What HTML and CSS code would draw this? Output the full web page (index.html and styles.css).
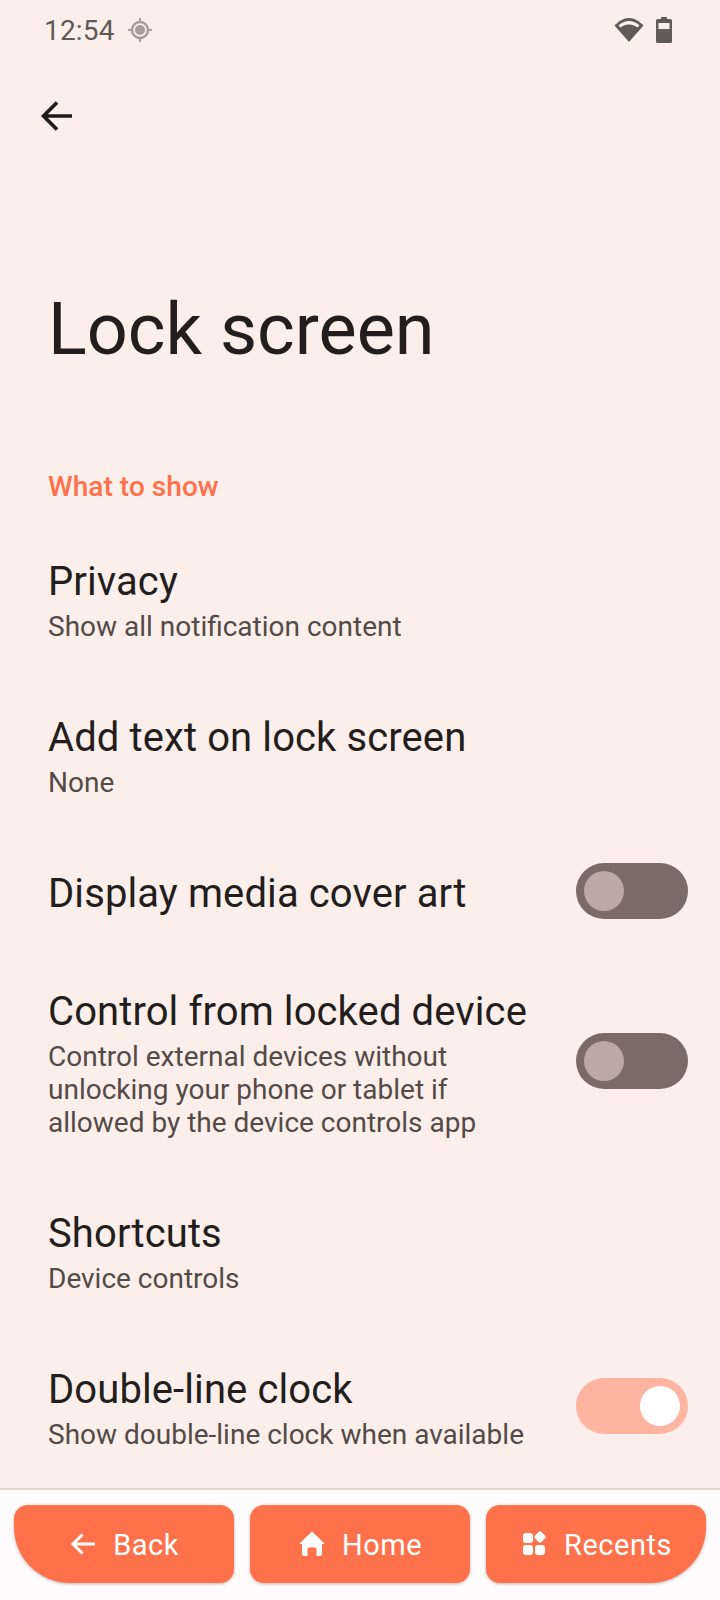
FILE: index.html
```html
<!DOCTYPE html>
<html lang="en">
<head>
<meta charset="utf-8">
<title>Lock screen</title>
<link rel="stylesheet" href="styles.css">
</head>
<body>
<div class="screen">
  <main class="content">
    <div class="status">
      <div class="status-left">
        <span class="time">12:54</span>
        <svg class="loc" viewBox="0 0 24 24" width="24" height="24"><circle cx="12" cy="12" r="8" fill="none" stroke="#a89c9a" stroke-width="2.500"/><circle cx="12" cy="12" r="5" fill="#a89c9a"/><path d="M12 0v4M12 20v4M0 12h4M20 12h4" stroke="#a89c9a" stroke-width="2" fill="none"/></svg>
      </div>
      <div class="status-right">
        <svg class="wifi" viewBox="0 0 30 26" width="30" height="26"><path d="M15 25 0.500 8.500C4.500 4.500 9.500 1 15 1s10.500 3.500 14.500 7.500z" fill="#625a59"/><path d="M4.500 8.500C7.500 5.500 11 4 15 4s7.500 1.500 10.500 4.500L23.500 10.500C21 8.500 18 7.500 15 7.500s-6 1-8.500 3z" fill="#fceeeb"/></svg>
        <svg class="batt" viewBox="0 0 16 26" width="16" height="26"><path d="M5 0h6v2h3.500a1.500 1.500 0 0 1 1.500 1.500v21a1.500 1.500 0 0 1-1.500 1.500h-13A1.500 1.500 0 0 1 0 24.500v-21A1.500 1.500 0 0 1 1.500 2H5z" fill="#625a59"/><rect x="2.500" y="6" width="11" height="6" fill="#fceeeb"/></svg>
      </div>
    </div>
    <div class="appbar">
      <svg viewBox="0 0 32 32" width="32" height="32"><path d="M32 16H4M17 2.500 3.500 16 17 29.500" fill="none" stroke="#1e1a19" stroke-width="3.600"/></svg>
    </div>
    <h1 class="title">Lock screen</h1>
    <h2 class="section">What to show</h2>
    <div class="item"><div class="text"><div class="name">Privacy</div><div class="sub">Show all notification content</div></div></div>
    <div class="item"><div class="text"><div class="name">Add text on lock screen</div><div class="sub">None</div></div></div>
    <div class="item item-single"><div class="text"><div class="name">Display media cover art</div></div><div class="toggle"><span class="knob"></span></div></div>
    <div class="item"><div class="text"><div class="name">Control from locked device</div><div class="sub">Control external devices without<br>unlocking your phone or tablet if<br>allowed by the device controls app</div></div><div class="toggle"><span class="knob"></span></div></div>
    <div class="item"><div class="text"><div class="name">Shortcuts</div><div class="sub">Device controls</div></div></div>
    <div class="item"><div class="text"><div class="name">Double-line clock</div><div class="sub">Show double-line clock when available</div></div><div class="toggle on"><span class="knob"></span></div></div>
  </main>
  <nav class="nav">
    <div class="btn btn-back">
      <svg viewBox="0 0 28 28" width="28" height="28"><path d="M26 14H5M13.500 4.500 4 14l9.500 9.500" fill="none" stroke="#fff" stroke-width="3"/></svg>
      <span class="label">Back</span>
    </div>
    <div class="btn">
      <svg viewBox="0 0 28 28" width="28" height="28"><path d="M14 1.500 27 14h-3v10a2 2 0 0 1-2 2h-3.500v-7a1.500 1.500 0 0 0-1.500-1.500h-6A1.500 1.500 0 0 0 9.500 19v7H6a2 2 0 0 1-2-2V14H1z" fill="#fff"/></svg>
      <span class="label">Home</span>
    </div>
    <div class="btn btn-recents">
      <svg viewBox="0 0 28 28" width="28" height="28"><rect x="3" y="3" width="10" height="10" rx="3" fill="#fff"/><rect x="3" y="15" width="10" height="10" rx="3" fill="#fff"/><rect x="15" y="15" width="10" height="10" rx="3" fill="#fff"/><rect x="15.500" y="2.500" width="9" height="9" rx="2" transform="rotate(45 20 7)" fill="#fff"/></svg>
      <span class="label">Recents</span>
    </div>
  </nav>
</div>
</body>
</html>
```
FILE: styles.css
```css
* { box-sizing: border-box; }
html, body { margin: 0; padding: 0; }
body { width: 720px; height: 1600px; overflow: hidden; font-family: Roboto, sans-serif; }
.screen { width: 720px; height: 1600px; display: flex; flex-direction: column; background: #fdfbfb; }
.content { height: 1488px; background: #fceeeb; overflow: hidden; }
.status { height: 60px; display: flex; justify-content: space-between; align-items: center; padding: 0 48px 0 44px; }
.status-left { display: flex; align-items: center; gap: 13px; }
.time { font-size: 28px; color: #625a59; letter-spacing: 0.2px; }
.status-right { display: flex; align-items: center; gap: 12px; }
.appbar { height: 81px; padding: 40px 0 0 40px; }
.appbar svg { display: block; }
.title { margin: 147px 0 0 48px; font-size: 72px; line-height: 84px; font-weight: 400; color: #231e1d; }
.section { margin: 97px 0 18px 48px; font-size: 28px; line-height: 36px; font-weight: 500; letter-spacing: 0.05px; color: #ff714b; }
.item { display: flex; align-items: center; justify-content: space-between; padding: 36px 32px 36px 48px; }
.item-single { padding-top: 28px; padding-bottom: 28px; }
.text { min-width: 0; }
.name { font-size: 40px; line-height: 46px; letter-spacing: 0.1px; color: #231e1d; }
.sub { font-size: 28px; line-height: 33px; color: #544a48; margin-top: 5px; }
.toggle { width: 112px; height: 56px; margin-bottom: 6px; border-radius: 28px; background: #7b6a66; padding: 8px; display: flex; flex: none; }
.knob { width: 40px; height: 40px; border-radius: 50%; background: #bda9a4; }
.toggle.on { background: #ffb4a1; justify-content: flex-end; }
.toggle.on .knob { background: #fff; }
.nav { flex: 1; border-top: 2px solid #e2d6d3; display: flex; gap: 16px; padding: 15px 14px 0; }
.btn { width: 220px; height: 78px; background: #ff714b; border-radius: 14px; color: #fff; font-size: 29px; font-family: Roboto, sans-serif; letter-spacing: 0.5px; display: flex; align-items: center; justify-content: center; gap: 16px; box-shadow: 0 1px 3px rgba(90,50,40,.35); }
.label { padding-top: 2px; }
.btn-back { border-bottom-left-radius: 56px; }
.btn-recents { border-bottom-right-radius: 56px; }
```
